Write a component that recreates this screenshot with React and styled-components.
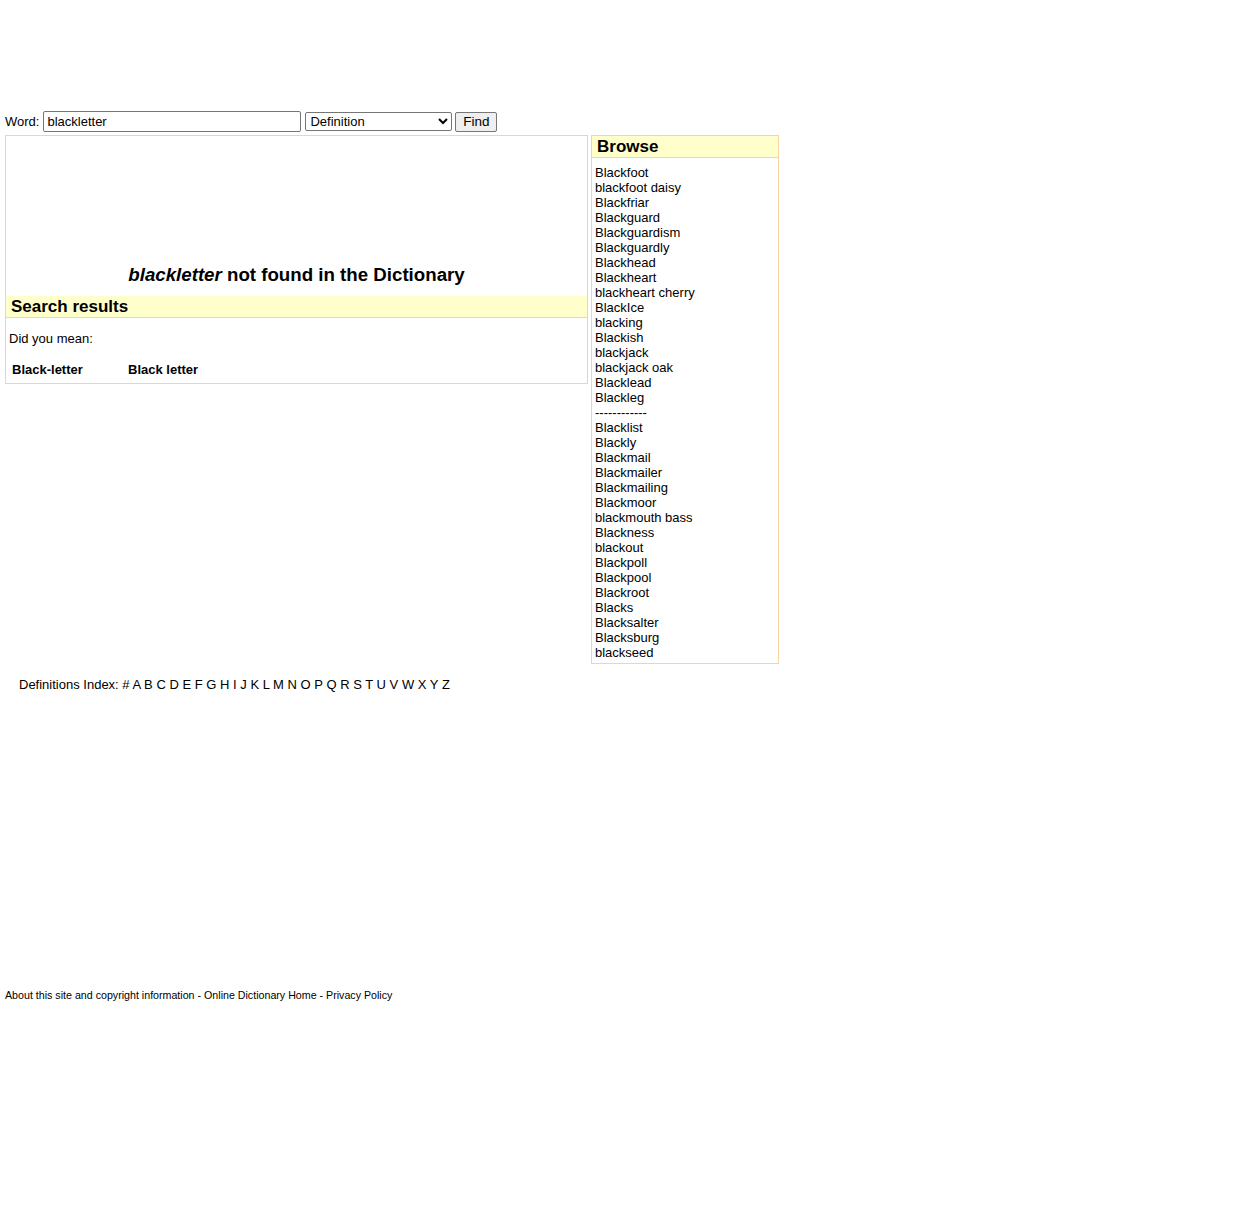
import React from 'react';
import styled, { createGlobalStyle } from 'styled-components';

const browseWords = [
  'Blackfoot', 'blackfoot daisy', 'Blackfriar', 'Blackguard', 'Blackguardism',
  'Blackguardly', 'Blackhead', 'Blackheart', 'blackheart cherry', 'BlackIce',
  'blacking', 'Blackish', 'blackjack', 'blackjack oak', 'Blacklead', 'Blackleg',
  '------------',
  'Blacklist', 'Blackly', 'Blackmail', 'Blackmailer', 'Blackmailing', 'Blackmoor',
  'blackmouth bass', 'Blackness', 'blackout', 'Blackpoll', 'Blackpool', 'Blackroot',
  'Blacks', 'Blacksalter', 'Blacksburg', 'blackseed',
];

const letters = '# A B C D E F G H I J K L M N O P Q R S T U V W X Y Z'.split(' ');

const App = () => {
  return (
    <Page>
      <GlobalStyle />
      <TopAd />
      <SearchForm onSubmit={(e) => e.preventDefault()}>
        <label htmlFor="word">Word:</label>
        <WordInput id="word" type="text" defaultValue="blackletter" />
        <TypeSelect defaultValue="Definition">
          <option>Definition</option>
          <option>Synonyms</option>
          <option>Antonyms</option>
        </TypeSelect>
        <FindButton type="submit">Find</FindButton>
      </SearchForm>

      <Columns>
        <MainBox>
          <AdSpace />
          <NotFound>
            <em>blackletter</em> not found in the Dictionary
          </NotFound>
          <BarTitle>Search results</BarTitle>
          <DidYouMean>Did you mean:</DidYouMean>
          <Suggestions>
            <Suggestion href="#">Black-letter</Suggestion>
            <Suggestion href="#">Black letter</Suggestion>
          </Suggestions>
        </MainBox>

        <BrowseBox>
          <BarTitle>Browse</BarTitle>
          <BrowseList>
            {browseWords.map((w, i) => (
              <li key={i}>
                {w.startsWith('-') ? w : <a href="#">{w}</a>}
              </li>
            ))}
          </BrowseList>
        </BrowseBox>
      </Columns>

      <IndexLine>
        Definitions Index:{' '}
        {letters.map((l) => (
          <React.Fragment key={l}>
            <a href="#">{l}</a>{' '}
          </React.Fragment>
        ))}
      </IndexLine>

      <Footer>
        <a href="#">About this site and copyright information</a> -{' '}
        <a href="#">Online Dictionary Home</a> - <a href="#">Privacy Policy</a>
      </Footer>
    </Page>
  );
};

// Styled components

const GlobalStyle = createGlobalStyle`
  body {
    margin: 0;
    background: #ffffff;
    color: #000000;
    font-family: "Liberation Sans", Arial, sans-serif;
    font-size: 13px;
  }
  a {
    color: #000000;
    text-decoration: none;
  }
`;

const Page = styled.div`
  padding: 0 5px;
  width: 774px;
`;

const TopAd = styled.div`
  height: 111px;
`;

const SearchForm = styled.form`
  display: flex;
  align-items: center;
  height: 21px;
  margin: 0;
  font-size: 13px;

  label {
    margin-right: 4px;
  }
`;

const WordInput = styled.input`
  box-sizing: border-box;
  width: 258px;
  height: 21px;
  padding: 1px 3px;
  border: 1px solid #767676;
  border-radius: 2px;
  font-family: "Liberation Sans", Arial, sans-serif;
  font-size: 13px;
  margin: 0 4px 0 0;
`;

const TypeSelect = styled.select`
  box-sizing: border-box;
  width: 147px;
  height: 19px;
  padding: 0;
  border: 1px solid #767676;
  border-radius: 2px;
  font-family: "Liberation Sans", Arial, sans-serif;
  font-size: 13px;
  background: #fff;
  margin: 0 3px 0 0;
`;

const FindButton = styled.button`
  box-sizing: border-box;
  width: 42px;
  height: 20px;
  padding: 0 6px;
  border: 1px solid #767676;
  border-radius: 2px;
  background: #efefef;
  font-family: "Liberation Sans", Arial, sans-serif;
  font-size: 13.5px;
`;

const Columns = styled.div`
  display: flex;
  align-items: flex-start;
  gap: 3px;
  margin-top: 3px;
`;

const MainBox = styled.div`
  width: 581px;
  border: 1px solid #f8d3a0;
  padding-bottom: 5px;
`;

const AdSpace = styled.div`
  height: 127px;
`;

const NotFound = styled.h1`
  margin: 0 0 10px;
  text-align: center;
  font-size: 18.7px;
  line-height: 23px;
  font-weight: bold;

  em {
    font-style: italic;
  }
`;

const BarTitle = styled.div`
  height: 21px;
  line-height: 21px;
  padding: 0 5px;
  background: #ffffcc;
  border-bottom: 1px solid #f8d3a0;
  font-size: 17px;
  font-weight: bold;
`;

const DidYouMean = styled.p`
  margin: 13px 0 0 3px;
  line-height: 16px;
`;

const Suggestions = styled.div`
  display: grid;
  grid-template-columns: 116px 116px;
  margin: 15px 0 0 6px;
  line-height: 16px;
`;

const Suggestion = styled.a`
  font-weight: bold;
`;

const BrowseBox = styled.div`
  width: 186px;
  border: 1px solid #f8d3a0;
`;

const BrowseList = styled.ul`
  list-style: none;
  margin: 0;
  padding: 7px 3px 3px;
  line-height: 15px;
`;

const IndexLine = styled.div`
  margin-top: 13px;
  padding-left: 14px;
  line-height: 16px;
`;

const Footer = styled.div`
  margin-top: 296px;
  font-size: 10.67px;
  line-height: 13px;
  padding-bottom: 200px;
`;

export default App;
